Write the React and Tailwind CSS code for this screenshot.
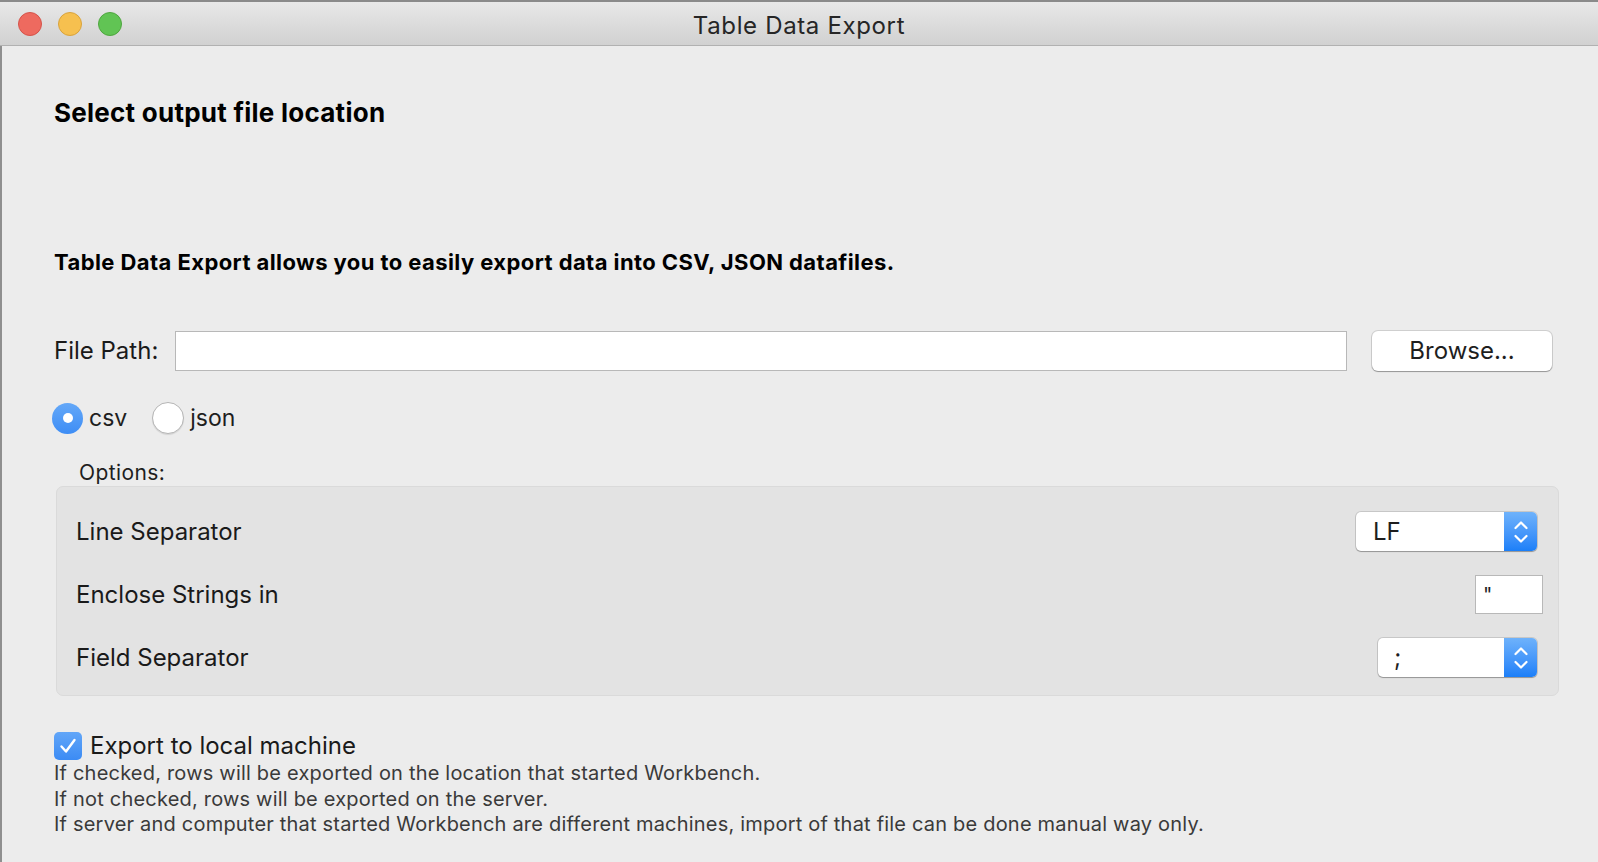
import React, { useState } from "react";

const Stepper = () => (
  <div className="w-[33px] h-full rounded-r-[5px] bg-gradient-to-b from-[#6eb2fb] to-[#1b7ff8] flex items-center justify-center">
    <svg width="16" height="26" viewBox="0 0 16 26" fill="none">
      <path d="M2.5 9 L8 3.5 L13.5 9" stroke="white" strokeWidth="2.2" strokeLinecap="round" strokeLinejoin="round" />
      <path d="M2.5 17 L8 22.5 L13.5 17" stroke="white" strokeWidth="2.2" strokeLinecap="round" strokeLinejoin="round" />
    </svg>
  </div>
);

const Select = ({ value, className, textClass }) => (
  <div className={"h-[39px] flex bg-white rounded-[5px] shadow-[0_0_0_1px_rgba(0,0,0,0.12),0_1px_1px_rgba(0,0,0,0.25)] " + className}>
    <div className={"flex-1 flex items-center text-[24px] text-[#1e1e1e] " + textClass}>{value}</div>
    <Stepper />
  </div>
);

const Radio = ({ checked, label, onClick }) => (
  <button onClick={onClick} className="flex items-center gap-[6px]">
    {checked ? (
      <span className="w-[31px] h-[31px] rounded-full bg-gradient-to-b from-[#64a8f8] to-[#3d8df5] flex items-center justify-center">
        <span className="w-[10px] h-[10px] rounded-full bg-white" />
      </span>
    ) : (
      <span className="w-[32px] h-[32px] rounded-full bg-white border border-[#b5b5b5] shadow-[0_1px_1px_rgba(0,0,0,0.1)]" />
    )}
    <span className="text-[23px] text-[#1e1e1e]">{label}</span>
  </button>
);

const App = () => {
  const [format, setFormat] = useState("csv");
  const [local, setLocal] = useState(true);

  return (
    <div className="w-[1598px] h-[862px] overflow-hidden bg-[#ececec] font-['Inter',sans-serif] flex flex-col">
      {/* title bar */}
      <div className="h-[2px] bg-[#8a8a8a]" />
      <div className="h-[44px] flex items-center relative bg-gradient-to-b from-[#e8e8e8] to-[#d1d1d1] border-b border-[#b1b1b1]">
        <div className="flex items-center gap-[16px] pl-[18px]">
          <span className="w-[24px] h-[24px] rounded-full bg-[#ee6a5f] border border-[#d5534a]" />
          <span className="w-[24px] h-[24px] rounded-full bg-[#f6c04f] border border-[#d9a33c]" />
          <span className="w-[24px] h-[24px] rounded-full bg-[#61c454] border border-[#4fa63f]" />
        </div>
        <div className="absolute left-0 right-0 top-[6px] text-center text-[24px] tracking-[0.65px] text-[#262626] pointer-events-none">Table Data Export</div>
      </div>

      <div className="flex-1 border-l-2 border-[#8f8f8f] pl-[52px] pr-[38px] flex flex-col">
        <div className="h-[40px] mt-[46px] flex items-center text-[26px] tracking-[0.25px] font-bold text-black">Select output file location</div>

        <div className="h-[40px] mt-[110px] flex items-center text-[22px] tracking-[0.42px] font-bold text-black">
          Table Data Export allows you to easily export data into CSV, JSON datafiles.
        </div>

        <div className="h-[40px] mt-[49px] flex items-center">
          <span className="w-[121px] text-[24px] text-[#1a1a1a]">File Path:</span>
          <input className="w-[1172px] h-[40px] bg-white border border-[#b8b8b8] outline-none px-2 text-[20px]" />
          <button className="ml-[25px] w-[180px] h-[40px] bg-white rounded-[6px] shadow-[0_0_0_1px_rgba(0,0,0,0.12),0_1px_1px_rgba(0,0,0,0.28)] text-[24px] text-[#1e1e1e]">
            Browse...
          </button>
        </div>

        <div className="h-[32px] mt-[31px] flex items-center gap-[25px] -ml-[2px]">
          <Radio checked={format === "csv"} label="csv" onClick={() => setFormat("csv")} />
          <Radio checked={format === "json"} label="json" onClick={() => setFormat("json")} />
        </div>

        <div className="h-[24px] mt-[27px] flex items-center pl-[25px] text-[21px] tracking-[0.4px] text-[#1e1e1e]">Options:</div>

        <div className="mt-[1px] ml-[2px] h-[210px] w-[1503px] bg-[#e3e3e3] border border-[#dadada] rounded-[7px] pt-[13px] pl-[19px] pr-[21px] flex flex-col">
          <div className="h-[63px] flex items-center justify-between">
            <span className="text-[24px] text-[#1a1a1a]">Line Separator</span>
            <Select value="LF" className="w-[181px]" textClass="pl-[17px]" />
          </div>
          <div className="h-[63px] flex items-center justify-between">
            <span className="text-[24px] text-[#1a1a1a]">Enclose Strings in</span>
            <input
              defaultValue={'"'}
              className="-mr-[6px] w-[68px] h-[39px] bg-white border border-[#b8b8b8] outline-none pl-[7px] text-[20px] text-[#1e1e1e]"
            />
          </div>
          <div className="h-[63px] flex items-center justify-between">
            <span className="text-[24px] text-[#1a1a1a]">Field Separator</span>
            <Select value=";" className="w-[159px]" textClass="pl-[16px]" />
          </div>
        </div>

        <button onClick={() => setLocal(!local)} className="mt-[36px] h-[28px] flex items-center gap-[8px] self-start">
          <span className={"w-[28px] h-[28px] rounded-[5px] flex items-center justify-center " + (local ? "bg-gradient-to-b from-[#62a6f8] to-[#3b8bf4]" : "bg-white border border-[#b5b5b5]")}>
            {local && (
              <svg width="20" height="18" viewBox="0 0 20 18" fill="none">
                <path d="M3.5 9.5 L8 14.5 L16.5 3" stroke="white" strokeWidth="2.4" strokeLinecap="round" strokeLinejoin="round" />
              </svg>
            )}
          </span>
          <span className="text-[24px] text-[#1a1a1a]">Export to local machine</span>
        </button>

        <div className="mt-[1px] text-[20px] tracking-[0.2px] leading-[25.5px] text-[#3a3a3a]">
          <p>If checked, rows will be exported on the location that started Workbench.</p>
          <p>If not checked, rows will be exported on the server.</p>
          <p>If server and computer that started Workbench are different machines, import of that file can be done manual way only.</p>
        </div>
      </div>
    </div>
  );
};

export default App;
